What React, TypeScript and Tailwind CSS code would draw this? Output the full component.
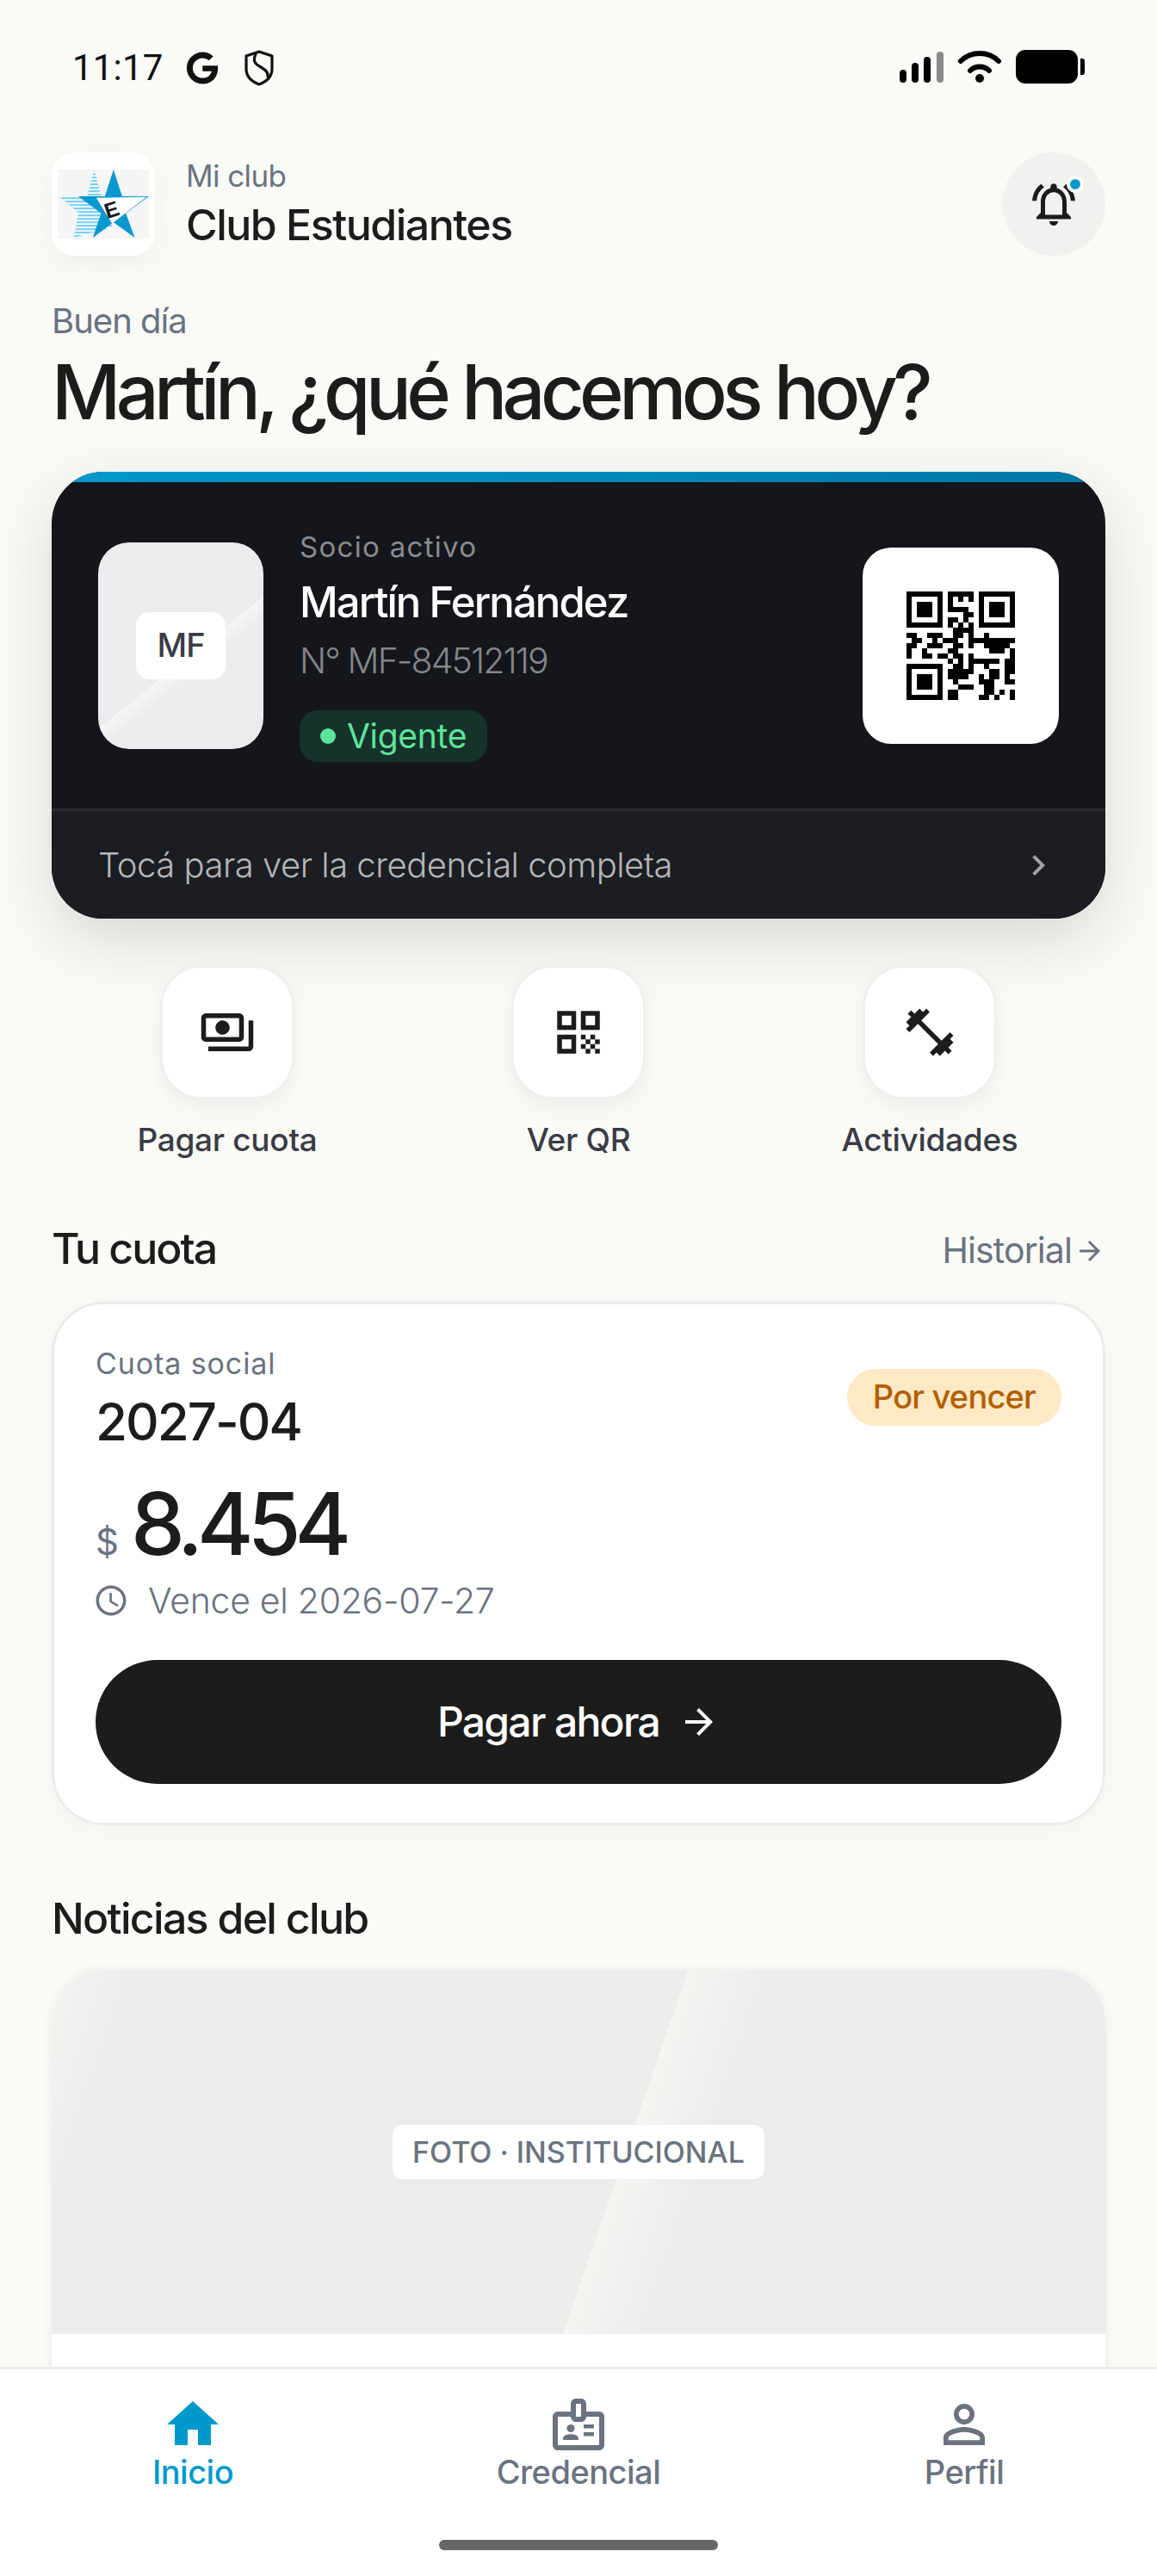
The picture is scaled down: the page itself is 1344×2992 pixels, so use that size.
import React from "react";
import { FaGoogle } from "react-icons/fa6";
import {
  MdOutlinePayments, MdQrCode, MdFitnessCenter, MdHome, MdOutlineBadge, MdPersonOutline,
  MdOutlineNotificationsActive, MdChevronRight, MdAccessTime, MdArrowForward,
} from "react-icons/md";

const QR = [
  "111111101111101111111",
  "100000101010101000001",
  "101110101000001011101",
  "101110101111001011101",
  "101110100001101011101",
  "100000101101001000001",
  "111111101010101111111",
  "000000000111100000000",
  "110011100110100100000",
  "011001011100111111111",
  "110011100110100111110",
  "100100001100000011101",
  "100110110110100000001",
  "000000001010111111011",
  "111111100110100100011",
  "100000101111100011011",
  "101110101111001011010",
  "101110100100001110011",
  "101110100011100110000",
  "100000101100000110101",
  "111111101100001101001",
];

function QrCode() {
  return (
    <svg width="126" height="126" viewBox="0 0 21 21" shapeRendering="crispEdges">
      {QR.map((row, y) =>
        row.split("").map((c, x) => (c === "1" ? <rect key={`${x}-${y}`} x={x} y={y} width="1" height="1" fill="#000" /> : null))
      )}
    </svg>
  );
}

function Logo() {
  return (
    <svg width="106" height="80" viewBox="0 0 317 240">
      <defs>
        <pattern id="checker" width="8" height="8" patternUnits="userSpaceOnUse">
          <rect width="8" height="8" fill="#fbfbfc" />
          <rect width="4" height="4" fill="#eff0f1" />
          <rect x="4" y="4" width="4" height="4" fill="#eff0f1" />
        </pattern>
        <pattern id="stripes" width="10" height="12" patternUnits="userSpaceOnUse">
          <rect width="10" height="12" fill="#ffffff" />
          <rect width="10" height="7" fill="#7fd0f7" />
        </pattern>
      </defs>
      <rect width="317" height="240" fill="url(#checker)" />
      <polygon points="127,2 151,90 240,90 170,150 190,200 56,237 72,150 4,92 102,92" fill="url(#stripes)" />
      <polygon points="194,0 224,93 317,93 237,152 268,237 194,184 122,237 151,152 71,93 164,93" fill="#0b97d0" />
      <polygon points="134,98 309,95 189,188" fill="#fff" />
      <text x="188" y="165" fontSize="74" fontWeight="900" fill="#1a1a1a" textAnchor="middle" fontFamily="Liberation Sans, sans-serif" transform="rotate(-18 188 140)">E</text>
    </svg>
  );
}

function ShieldIcon() {
  return (
    <svg width="36" height="42" viewBox="0 0 36 42" fill="none" stroke="#111" strokeWidth="3.2" strokeLinecap="round" strokeLinejoin="round">
      <path d="M18 2 L33 7 V22 C33 31 26 37 18 40 C10 37 3 31 3 22 V7 Z" />
      <path d="M14 5 C10 13 14 17 20 20 C27 24 29 27 28 31" />
    </svg>
  );
}

function StatusBar() {
  return (
    <div className="h-[156px] shrink-0 flex items-start justify-between pl-[84px] pr-[84px] pt-[58px]">
      <div className="flex items-center gap-[24px] h-[42px]">
        <span className="[font-family:Roboto,sans-serif] text-[42px] leading-[42px] tracking-[0.2px] text-[#111]">11:17</span>
        <FaGoogle className="ml-[2px] text-[38px] text-[#111]" />
        <div className="ml-[5px]"><ShieldIcon /></div>
      </div>
      <svg width="216" height="42" viewBox="0 0 216 42">
        <rect x="1" y="23" width="8" height="15" rx="4" fill="#000" />
        <rect x="15" y="15" width="8" height="23" rx="4" fill="#000" />
        <rect x="29" y="8" width="8" height="30" rx="4" fill="#000" />
        <rect x="44" y="2" width="8" height="36" rx="4" fill="#8a8a8a" />
        <path d="M72 13 C84 1 104 1 116 13" fill="none" stroke="#000" strokeWidth="6" strokeLinecap="round" />
        <path d="M83 24 C89 18 99 18 105 24" fill="none" stroke="#000" strokeWidth="6" strokeLinecap="round" />
        <circle cx="94" cy="33" r="5" fill="#000" />
        <rect x="136" y="0" width="72" height="39" rx="11" fill="#000" />
        <path d="M211 10 h2 a3 3 0 0 1 3 3 v13 a3 3 0 0 1 -3 3 h-2 z" fill="#000" />
      </svg>
    </div>
  );
}

function QuickAction({ icon, label }: { icon: React.ReactNode; label: string }) {
  return (
    <div className="flex flex-col items-center">
      <div className="w-[156px] h-[156px] rounded-[48px] bg-white border-[3px] border-[#f0f0f0] shadow-[0_9px_24px_rgba(0,0,0,0.05)] flex items-center justify-center text-[#1c1c1c]">
        {icon}
      </div>
      <div className="mt-[23px] text-[37px] leading-[48px] font-medium tracking-[-0.3px] text-[#3b3b45]">{label}</div>
    </div>
  );
}

function NavItem({ icon, label, active }: { icon: React.ReactNode; label: string; active?: boolean }) {
  return (
    <div className={`flex flex-col items-center ${active ? "text-[#0099cc]" : "text-[#6b7280]"}`}>
      <div className="h-[72px] flex items-center justify-center">{icon}</div>
      <div className="-mt-[5px] text-[38px] leading-[48px] font-medium tracking-[-0.5px]">{label}</div>
    </div>
  );
}

export default function App() {
  return (
    <div className="[font-family:Inter,sans-serif] relative w-[1344px] h-[2992px] overflow-hidden bg-[#fafbf7] flex flex-col text-[#1c1c1c]">
      <StatusBar />
      <main className="flex-1 min-h-0 overflow-hidden px-[60px]">
        <header className="mt-[21px] flex items-center justify-between">
          <div className="flex items-center gap-[36px]">
            <div className="w-[120px] h-[120px] rounded-[27px] bg-white shadow-[0_9px_30px_rgba(0,0,0,0.05)] flex items-center justify-center">
              <Logo />
            </div>
            <div className="-mt-[3px]">
              <div className="text-[35px] leading-[48px] text-[#6b7280] tracking-[-0.6px]">Mi club</div>
              <div className="mt-[3px] text-[50px] leading-[60px] font-medium tracking-[-1.5px]">Club Estudiantes</div>
            </div>
          </div>
          <div className="relative w-[120px] h-[120px] rounded-full bg-[#f1f2ef] flex items-center justify-center">
            <MdOutlineNotificationsActive className="text-[60px] text-[#1c1c1c]" />
            <span className="absolute left-[75px] top-[27px] w-[20px] h-[20px] rounded-full bg-[#0099cc] border-[4px] border-white" />
          </div>
        </header>

        <div className="mt-[52px] text-[40px] leading-[48px] text-[#6b7280] tracking-[-1px]">Buen día</div>
        <h1 className="mt-[4px] text-[88px] leading-[108px] font-medium tracking-[-5.6px] text-[#1c1c1c]">Martín, ¿qué hacemos hoy?</h1>

        <section className="mt-[39px] rounded-[60px] bg-[#14161b] overflow-hidden shadow-[0_24px_72px_rgba(0,0,0,0.14)]">
          <div className="h-[12px] bg-[linear-gradient(90deg,#0099cc,#0077a3)]" />
          <div className="h-[379px] px-[54px] flex items-center">
            <div className="relative w-[192px] h-[240px] rounded-[36px] bg-[linear-gradient(141.3deg,#ececee_0%,#ececee_55%,#f6f6f3_55%,#ececee_62%)] flex items-center justify-center">
              <div className="w-[104px] h-[78px] rounded-[15px] bg-white flex items-center justify-center text-[38px] font-medium text-[#3b3b45] tracking-[-1px]">MF</div>
            </div>
            <div className="ml-[42px] flex-1">
              <div className="text-[33px] leading-[42px] text-[#8b8c90] tracking-[1.3px]">Socio activo</div>
              <div className="mt-[14px] text-[49px] leading-[60px] font-medium text-white tracking-[-1.9px]">Martín Fernández</div>
              <div className="mt-[10px] text-[41px] leading-[54px] font-light text-[#85868a] tracking-[-1.9px]">N° MF-84512119</div>
              <div className="mt-[31px] inline-flex h-[60px] items-center rounded-[21px] bg-[#15332b] pl-[24px] pr-[24px]">
                <span className="w-[18px] h-[18px] rounded-full bg-[#5ee49b]" />
                <span className="ml-[13px] text-[39px] text-[#5ee49b] tracking-[-0.3px]">Vigente</span>
              </div>
            </div>
            <div className="w-[228px] h-[228px] rounded-[33px] bg-white flex items-center justify-center">
              <QrCode />
            </div>
          </div>
          <div className="h-[128px] border-t-[3px] border-[#2a2c31] bg-[#1b1d22] pl-[54px] pr-[54px] flex items-center justify-between">
            <span className="text-[40px] text-[#b5b6b8] font-light tracking-[-0.5px]">Tocá para ver la credencial completa</span>
            <MdChevronRight className="text-[48px] text-[#a0a1a4]" />
          </div>
        </section>

        <div className="mt-[54px] grid grid-cols-3">
          <QuickAction icon={<MdOutlinePayments className="text-[66px]" />} label="Pagar cuota" />
          <QuickAction icon={<MdQrCode className="text-[66px]" />} label="Ver QR" />
          <QuickAction icon={<MdFitnessCenter className="text-[66px]" />} label="Actividades" />
        </div>

        <div className="mt-[68px] flex items-center justify-between">
          <h2 className="text-[50px] leading-[60px] font-medium tracking-[-2px]">Tu cuota</h2>
          <span className="mt-[6px] flex items-center text-[41px] text-[#6b7280] tracking-[-0.9px]">Historial<MdArrowForward className="ml-[3px] text-[36px]" /></span>
        </div>

        <section className="mt-[28px] rounded-[60px] bg-white border-[3px] border-[#ececee] shadow-[0_6px_24px_rgba(0,0,0,0.03)] px-[48px] pt-[48px] h-[608px]">
          <div className="flex items-start justify-between">
            <div>
              <div className="text-[34px] leading-[42px] text-[#6b7280] tracking-[0.9px]">Cuota social</div>
              <div className="mt-[10px] text-[60px] leading-[72px] font-medium tracking-[-2px]">2027-04</div>
            </div>
            <span className="mt-[27px] h-[66px] px-[30px] rounded-full bg-[#fee9c5] text-[#b35f00] text-[38px] font-medium tracking-[-0.8px] flex items-center">Por vencer</span>
          </div>
          <div className="mt-[29px] flex items-baseline gap-[14px]">
            <span className="text-[42px] leading-[108px] text-[#6b7280]">$</span>
            <span className="text-[100px] leading-[108px] font-medium tracking-[-7px]">8.454</span>
          </div>
          <div className="-mt-[13px] flex items-center gap-[22px] text-[#6b7280]">
            <MdAccessTime className="text-[42px] -ml-[3px]" />
            <span className="text-[41px] leading-[54px] font-light tracking-[-0.3px]">Vence el 2026-07-27</span>
          </div>
          <div className="mt-[42px] h-[144px] rounded-full bg-[#1c1c1c] text-white flex items-center justify-center gap-[22px] text-[48px] font-medium tracking-[-1.7px]">
            Pagar ahora <MdArrowForward className="text-[48px]" />
          </div>
        </section>

        <h2 className="mt-[78px] text-[50px] leading-[60px] font-medium tracking-[-1.7px]">Noticias del club</h2>

        <section className="mt-[30px] rounded-[60px] bg-white overflow-hidden shadow-[0_0_12px_rgba(0,0,0,0.06)] h-[600px]">
          <div className="h-[423px] bg-[linear-gradient(109deg,#f5f5f3_0%,#ececee_7%,#ececee_54%,#f5f5f2_54%,#ececee_61%)] flex items-center justify-center">
            <span className="h-[63px] px-[23px] rounded-[12px] bg-white flex items-center text-[34px] font-medium text-[#6b7280] tracking-[0px]">FOTO · INSTITUCIONAL</span>
          </div>
        </section>
      </main>

      <nav className="h-[243px] shrink-0 bg-white border-t-[3px] border-[#ececee] relative pt-[28px]">
        <div className="grid grid-cols-3">
          <NavItem active icon={<MdHome className="text-[72px]" />} label="Inicio" />
          <NavItem icon={<MdOutlineBadge className="text-[72px]" />} label="Credencial" />
          <NavItem icon={<MdPersonOutline className="text-[72px]" />} label="Perfil" />
        </div>
        <div className="absolute left-[510px] top-[198px] w-[324px] h-[12px] rounded-full bg-[#666]" />
      </nav>
    </div>
  );
}
